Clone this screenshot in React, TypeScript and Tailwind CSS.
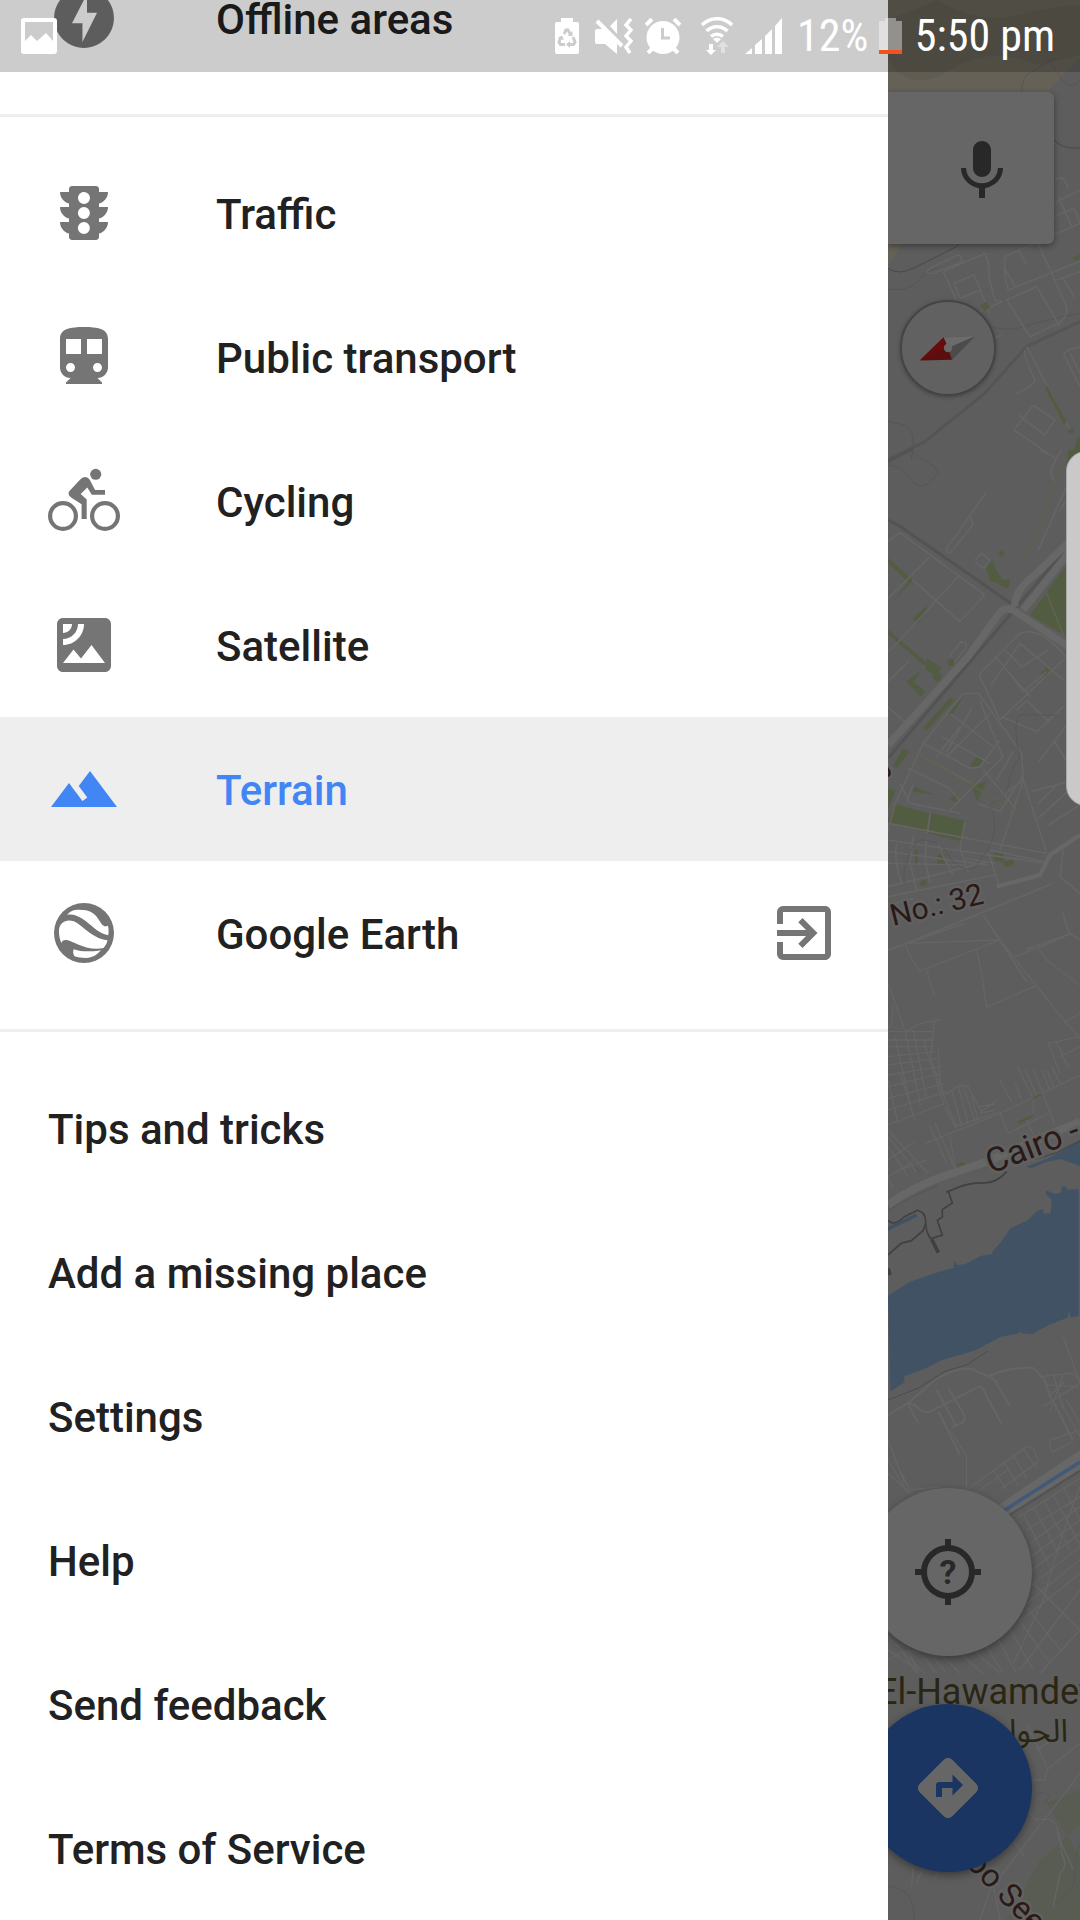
import { useState } from "react";
import type { ReactNode } from "react";
import {
  MdDirections,
  MdDirectionsTransit,
  MdExitToApp,
  MdOfflineBolt,
  MdSatellite,
  MdTerrain,
  MdTraffic,
} from "react-icons/md";

interface LayerItem {
  id: string;
  label: string;
  icon: ReactNode;
  external?: boolean;
}

const layers: LayerItem[] = [
  { id: "traffic", label: "Traffic", icon: <MdTraffic className="size-18" /> },
  { id: "transit", label: "Public transport", icon: <MdDirectionsTransit className="size-18" /> },
  { id: "cycling", label: "Cycling", icon: <CyclingIcon /> },
  { id: "satellite", label: "Satellite", icon: <MdSatellite className="size-18" /> },
  { id: "terrain", label: "Terrain", icon: <MdTerrain className="size-18" /> },
  { id: "earth", label: "Google Earth", icon: <EarthIcon />, external: true },
];

const links = [
  "Tips and tricks",
  "Add a missing place",
  "Settings",
  "Help",
  "Send feedback",
  "Terms of Service",
];

export default function App() {
  const [active, setActive] = useState("terrain");

  return (
    <div className="relative flex min-h-screen overflow-hidden bg-white font-['Roboto',sans-serif]">
      <nav className="min-w-0 flex-1 overflow-hidden bg-white text-[42px] leading-[50px] font-medium text-[#212121]">
        {/* the list is scrolled, so its first row is partly cut off */}
        <div className="-mt-[54px] pb-6">
          <DrawerRow icon={<MdOfflineBolt className="size-18" />} label="Offline areas" />
        </div>

        <div className="border-t-3 border-[#eeeeee] py-6">
          {layers.map((item) => (
            <DrawerRow
              key={item.id}
              icon={item.icon}
              label={item.label}
              external={item.external}
              selected={item.id === active}
              onClick={() => setActive(item.id)}
            />
          ))}
        </div>

        <div className="border-t-3 border-[#eeeeee] pt-6">
          {links.map((label) => (
            <a key={label} href="#" className="flex h-36 items-center px-12 pt-1">
              {label}
            </a>
          ))}
        </div>
      </nav>

      <MapPane />
      <StatusBar />
    </div>
  );
}

function DrawerRow({ icon, label, external, selected, onClick }: {
  icon: ReactNode;
  label: string;
  external?: boolean;
  selected?: boolean;
  onClick?: () => void;
}) {
  return (
    <button
      type="button"
      onClick={onClick}
      className={`flex h-36 w-full items-center px-12 text-left ${
        selected ? "bg-[#eeeeee] text-[#4285f4]" : ""
      }`}
    >
      <span className={`mr-24 shrink-0 ${selected ? "text-[#4285f4]" : "text-[#757575]"}`}>{icon}</span>
      <span className="flex-1 pt-1">{label}</span>
      {external && <MdExitToApp className="size-18 shrink-0 text-[#757575]" />}
    </button>
  );
}

function StatusBar() {
  return (
    <header className="absolute inset-x-0 top-0 flex h-18 items-center justify-between bg-black/20 pr-6 pl-5 text-white">
      <svg viewBox="0 0 38 38" className="size-[38px]" fill="currentColor">
        <path fillRule="evenodd" d="M4 1h30a3 3 0 0 1 3 3v30a3 3 0 0 1-3 3H4a3 3 0 0 1-3-3V4a3 3 0 0 1 3-3zm1 4v19l6-6 6 6 9-8 7 8V5z" />
      </svg>

      <div className="flex items-center gap-3">
        <svg viewBox="0 0 28 36" className="h-9 w-7">
          <path d="M8 0h12v4h4a2 2 0 0 1 2 2v28a2 2 0 0 1-2 2H4a2 2 0 0 1-2-2V6a2 2 0 0 1 2-2h4z" fill="currentColor" />
          <g fill="none" stroke="#cccccc" strokeWidth="3">
            <path d="M11 16l2-4h2l2.500 4.500" />
            <path d="M8 19l-2 5 1.500 2.500H12" />
            <path d="M20 19l2 5-1.500 2.500H15" />
          </g>
          <path d="M19.500 13v5h-5zM5 20l4-2.500 2 4.500zM17 23v7l-4-3.500z" fill="#cccccc" />
        </svg>

        <svg viewBox="0 0 40 36" className="h-9 w-10" fill="currentColor">
          <path d="M4 11h6l4 0 10 12v13L12 26H4a2 2 0 0 1-2-2V13a2 2 0 0 1 2-2zM24 1v15l-7-8z" />
          <path d="M4 3l25 25" fill="none" stroke="currentColor" strokeWidth="4" />
          <path d="M38 1l-5 6 5 5-5 6 5 5-5 6 4 6" fill="none" stroke="currentColor" strokeWidth="3.500" />
        </svg>

        <svg viewBox="0 0 36 36" className="size-9">
          <circle cx="18" cy="19.500" r="16.500" fill="currentColor" />
          <path d="M1 7l6-6M35 7l-6-6M3 35l5-5M33 35l-5-5" stroke="currentColor" strokeWidth="4" />
          <path d="M17.500 10v10H25" fill="none" stroke="#cccccc" strokeWidth="3" />
        </svg>

        <svg viewBox="0 0 40 38" className="h-[38px] w-10">
          <g fill="none" stroke="currentColor" strokeWidth="3.500">
            <path d="M9 8a21 21 0 0 1 30 0" />
            <path d="M13.500 14a15 15 0 0 1 21 0" />
            <path d="M18 19.500a9 9 0 0 1 12 0" />
          </g>
          <path d="M20 22q4-3 8 0l-4 4z" fill="currentColor" />
          <path d="M16 27h4v6h3l-5 5-5-5h3z" fill="currentColor" />
          <path d="M28 36v-6h-4l6-6 6 6h-4v6z" fill="currentColor" opacity=".4" />
        </svg>

        <svg viewBox="0 0 40 36" className="h-9 w-10" fill="currentColor">
          <path d="M0 36l7-6v6zM10 27l7-6v15h-7zM20 18l7-7v25h-7zM30 8l7-8v36h-7z" />
        </svg>

        <span className="w-[70px] text-right font-['Roboto_Condensed','Roboto',sans-serif] text-[44px] leading-[50px]">12%</span>

        <svg viewBox="0 0 23 36" className="h-9 w-[23px]">
          <path d="M6 0h11v3h6v33H0V3h6z" fill="currentColor" opacity=".4" />
          <path d="M0 32h23v4H0z" fill="#f4511e" />
        </svg>

        <span className="w-[142px] text-center font-['Roboto_Condensed','Roboto',sans-serif] text-[44px] leading-[50px] whitespace-nowrap">5:50 pm</span>
      </div>
    </header>
  );
}

function MapPane() {
  return (
    <main className="relative w-48 shrink-0 overflow-hidden bg-[#5d5d5d]">
      <MapCanvas />

      <div className="absolute top-[92px] right-[26px] left-0 flex h-[152px] items-center justify-end rounded-r-md bg-[#666666] pt-1.5 pr-9 shadow-[0_2px_6px_rgba(0,0,0,0.4)]">
        <button type="button" aria-label="Voice search" className="text-[#282828]">
          <svg viewBox="0 0 24 24" className="size-18" fill="currentColor">
            <path d="M12 14c1.660 0 3-1.340 3-3V5c0-1.660-1.340-3-3-3S9 3.340 9 5v6c0 1.660 1.340 3 3 3zm5.300-3c0 3-2.540 5.100-5.300 5.100S6.700 14 6.700 11H5c0 3.410 2.720 6.230 6 6.720V21h2v-3.280c3.280-.48 6-3.300 6-6.720h-1.700z" />
          </svg>
        </button>
      </div>

      <button
        type="button"
        aria-label="Compass"
        className="absolute top-[300px] left-3 size-24 rounded-full border-2 border-[#444444] bg-[#626262]/85 shadow-[0_1px_4px_rgba(0,0,0,0.3)]"
      >
        <svg viewBox="2 2 92 92" className="size-full">
          <path d="M43.500 37.500l32-1.500L52 60z" fill="#4b4b4b" />
          <path d="M43.500 37.500l32-1.500L48 48z" fill="#6c6c6c" />
          <path d="M43.500 37.500L20 60.500l32-.8L48 48z" fill="#5c0d0d" />
          <path d="M43.500 37.500L20 60 48 48z" fill="#650c0c" />
          <circle cx="48" cy="48" r="4.200" fill="#686868" />
        </svg>
      </button>

      {/* edge panel handle */}
      <div className="absolute top-[451px] -right-2 h-[355px] w-[22px] rounded-l-[20px] border border-[#a8a8a8] bg-[#c9c9c9]" />

      <div className="absolute bottom-12 -left-6 flex flex-col gap-12">
        <button
          type="button"
          aria-label="My location"
          className="flex size-42 items-center justify-center rounded-full bg-[#666666] text-[#282828] shadow-[0_3px_8px_rgba(0,0,0,0.4)]"
        >
          <svg viewBox="0 0 72 72" className="size-18">
            <circle cx="36" cy="36" r="24" fill="none" stroke="currentColor" strokeWidth="6" />
            <path d="M36 3v8M36 61v8M3 36h8M61 36h8" stroke="currentColor" strokeWidth="6" />
            <text x="36" y="48" textAnchor="middle" fontSize="34" fontWeight="700" fill="currentColor">?</text>
          </svg>
        </button>
        <button
          type="button"
          aria-label="Directions"
          className="flex size-42 items-center justify-center rounded-full bg-[#1a3562] text-[#666666] shadow-[0_3px_8px_rgba(0,0,0,0.4)]"
        >
          <MdDirections className="size-18" />
        </button>
      </div>
    </main>
  );
}

function MapCanvas() {
  return (
    <svg viewBox="0 0 192 1920" preserveAspectRatio="xMinYMin slice" className="absolute inset-0 size-full">
      {/* desert and hills at the top */}
      <path d="M0 0h192v60L165 90 130 130 12 248 0 265z" fill="#656157" />
      <path d="M50 0q40 25 80 15t62-10v50l-40 10q-50-20-90 5T0 60V20z" fill="#605c52" />
      <path d="M192 58v90h-30V88z" fill="#5d5d5d" />

      <g transform="translate(-8 60) scale(.3333)" fill="none" stroke="#656565" strokeWidth="5">
        <path d="M24 625q30 22 75 0t130-65q30-25 30-40M522 240q30 30 78 24" stroke="#484848" strokeWidth="3" />
        <path d="M24 688q60 8 90-25t60-40M330 800q60 15 110-2t160-38M24 1085q60 8 70 30t0 85M600 60q-30 40-60-10l-40-60M425 95q0-50 30-60l70-40" stroke="#525252" strokeWidth="2" />
        <path d="M24 1200l110-55 180-145 125-140 161-75" stroke="#555555" strokeWidth="9" />
        <path d="M150 625q-20 18 10 15l85-33q0-30-20-18zM190 635l60 130M190 635l125-55q15 30 12 75l18 65 20 5-65 30M222 670l60-25 20 45-62 25zM135 755l60-28M135 755l65 140 165-70M300 690l30 70" />
        <path d="M415 570l25 45M375 590q-5 60 10 100l215-85M375 590l225-100M470 540l90 200q5 30-25 50l-85 40-70-110 90-40 70 120M376 630l30 50M530 660l70-25M550 655l35 60M522 430l78-40M522 470l60-25 20 45M535 410l40 90M525 360q25-20 40 25" />
        <path d="M435 870q-5 10 10 45t20 45q0 15-58 42M440 860l130 250M460 1035l-58 75 130 90M460 1035l65 45-30 45-80-60M600 860q-60 15-45 30l45 90M570 880l30 60" />
      </g>
      <g transform="translate(-8 60) scale(.3333)" fill="#525c40">
        <path d="M302 735l18-10 10 18-18 10zM578 592l22-8v12l-18 5zM500 975l60 110-8 8-55-105zM565 1110l15-5 5 15-18-2zM570 1200l25-70 5 0v70z" />
      </g>

      <g transform="translate(-8 450) scale(.3333)">
        <path d="M24 325l75 65-60 65 45-60-60-55zM98 505l45-40-10 30-20 25zM24 540l160 135-8 8L24 552zM140 625l45 28-18 25-30-20zM80 695l45-38-25 40 35 25-12 18zM130 832l82-90 8 10-80 90zM203 792l48-55-35 60zM318 355l20-25 10 30 20 30 22-2-5 28-55-25zM450 495l48-65 45 120zM500 425l60-80v210l-20-5zM565 0h35v20l-40 40zM355 312l12-12 8 12-15 8zM483 668l20-18 8 20-10 14zM40 945l30-50 17 12-37 50zM270 950l22-35 17 20-15 20zM275 1010l45-17-28 60zM98 1025l5-15 65 25zM210 1050l18-20 12 28zM42 1063l110 28-12 56-118-30zM155 1090l102 23-15 60-97-23zM24 1015l22 5-22 60zM105 1200h8v45h-8zM172 1215l20-8 8 40-26-2zM343 1210l28 2v25l-30-5zM370 1235l30-8v20l-25 5zM120 1295l20-5v15l-18 5zM560 560l30-20v20z" fill="#525c40" />
        <circle cx="172" cy="680" r="13" fill="#525c40" />
        <circle cx="213" cy="637" r="11" fill="#525c40" />
        <g fill="none" stroke="#656565" strokeWidth="5">
          <path d="M24 275l35-28 255 188-75 80L98 390M150 320l-130 130M239 375L60 570 24 605M85 635l-61 60M24 770l50 45M240 515l-70-60M318 128L198 298q5 15 15 8l65-80q0-30-15-22M285 330l20-20 25 20-20 25-25-20M208 620l35-45q20 0 15 18l-35 45M600 20l-125 280M555 155l-15 30M545 0q-40 60-30 80l10 15M480 0l25 12" />
          <path d="M300 670l120-120q50-20 110 40l50 55M330 710l90-130 130 110M345 620l105 120M375 600l50 50 80-50M380 660l50 65 70-60M300 670q-5 10 15 40l45 100M360 810l190-180M410 780l30-28 70 65M365 800l105 45 80-75M520 880l-45 55M520 880l80-110M520 870l80 125M455 1025l110-30M475 1060l60-60M470 1110l130-120M505 1125l95-60" />
          <path d="M250 730h45l130 180 5 80 70 220M250 730l-120 150-85 180-24 95M275 775l-75 130M240 830l-70 90M210 790l130 100M330 790l-130 130M300 755l70 170M185 860l145 80M130 880l140 75 30-5 60-80M110 910l165 90M85 955l125 60 30 40M430 990l-80 60M370 920l-160 160M310 960l100 120M400 905l-50 85M60 1000l30 60 150 30M290 1060l70 25 70-110M430 990l-70 210M80 1060l20-60" />
          <path d="M24 1120l475 90M24 1170l470 70M255 1115l-15 80 25 70M150 1090l-8 60M24 1205l300 40M24 1240l230 5M24 1310l300-75M24 1340l320-65M50 1180q-10 50 15 120M100 1155l-10 85 20 80M140 1170l-5 60 15 70M175 1180q20 60 45 95M325 1205l30 95M24 1365l80-20M255 1225l90 15M330 1200l160 35" />
          <path d="M310 1395l130 200M80 1480l440-180M600 1330l-60-50 10-80M548 1388l20 65-130 45M568 1450l32 20M24 1500l230-80" />
        </g>
        <path d="M24 210l35 18 345 240M24 925L560 295M24 35l75-40" fill="none" stroke="#535353" strokeWidth="9" />
        <path d="M24 885l240-265 90-125q20-30 50-12l196 130M404 470q0-50 60-95l136-130M430 480l170-215" fill="none" stroke="#676767" strokeWidth="22" />
        <path d="M600 1155l-90 60-30 60-130 35" fill="none" stroke="#676767" strokeWidth="13" />
        <path d="M555 20L425 355M110 910l300 175M500 430l50 125" fill="none" stroke="#5e624f" strokeWidth="5" />
        <path d="M24 45q40 0 70 45t80-20q0-20-45-40l-40-30M530 795H440q-30-10-32 30t10 100q-25 25-30 70t-60 70q20 40 15 80t-60 110q-25 10-50-10t-35-40-25-25-40-10-45 40-15 90" fill="none" stroke="#535353" strokeWidth="2" />
      </g>

      <g transform="translate(-8 940) scale(.3333)">
        <g fill="none" stroke="#656565" strokeWidth="4">
          <path d="M360 0L80 10M80 10q-5 10 15 45t25 38L360 0l195 245 45 50M405 50L555-10M290 30l15 70 15 102 148-65M475 25l25 35 100 75M555 245l45-25M140 90l25 82M24 130l52 145M40 190l-5 60-10 15" />
          <path d="M24 275h138M76 275l45-25 60-10M24 300h138M24 320h138M24 350l140-15M24 375l150-20M24 405l155-25M24 440l160-40M24 475l170-45M24 510l180-55M24 555l170-65M162 245l-10 110 45 130M175 320l5 100q10 60 55 150M76 275l45 220M100 270l40 210M45 290l45 200M60 400l45 140M24 420l30 130M130 300l60 190M24 590l85 105M24 570l120 130M24 620l60 90M24 660l80-55M24 710l75-45M40 750l-16-40" />
          <path d="M195 465l45-30 25 5 30 60 10 15 45-35M195 500l30 60 135-45M215 450l30 110M235 440l30 110M250 440l35 105M275 470l20 75M295 500l50-8M300 520l45-10M135 610l225-90M150 560l50 110M165 550l60 135M210 590l15 90M60 690l80-30" />
          <path d="M360 520l240-115M360 420l35 65M405 430l20 50M412 380l45 90M435 390l35 75M460 390l30 70M485 390l25 60M500 390l22 50M515 380l25 50M505 310l35 90M505 310l95-20M530 305l35 80M540 350l60-30M360 520l25 60 120-60M490 465l35 90M460 480v40M440 540l20 45" />
        </g>
        <path d="M412 545l48-22v8l-45 20zM460 470l25-10v6l-25 10zM232 672l20-5 4 10-24 8zM105 678l20 20-8-3z" fill="#525c40" />
        <path d="M24 795q60-45 150-80l140-48 286-122" fill="none" stroke="#676767" strokeWidth="24" />
        <path d="M24 812q70-45 150-75" fill="none" stroke="#535353" strokeWidth="3" />

        {/* the river */}
        <path d="M24 1068l20-14 45-28 70-25 62-18 2-22 8 14 24-2 50-26 30-5 8-14 20-22 15-22 12-18 30-15 20-8 32-30 15-6 5 14 20-2 3-40-18-18 2-10 25 10 18-2 4-20 8-2 8 12 34-2v380l-24 6-4-20-6 20-56 22-50 28-30-3-6-8-2 8-55 10-80 42-100 30-50 25-60 22v18l-42 28z" fill="#425265" />
        <path d="M438 680l60-22 50-25 52-32v78l-30-12-30-10-45 10-40 18zM24 860l85-40 2 10-87 42z" fill="#425265" />
        <path d="M380 695q-30 35-70 34t-80 15-25 10l12 35-30 20 0 22-15 10 15 45-35 10q-15-20-15-50t-25-35l-40 20q-30 30-48 10M24 945l40-35 30-8 35-30 8-20" fill="none" stroke="#404040" strokeWidth="5" />
        <path d="M155 898l20 40M24 985l6 20" stroke="#404040" strokeWidth="11" />
        <path d="M600 602l-70 36-65 20" fill="none" stroke="#484848" strokeWidth="4" />
        <path d="M24 1380l90-35 80-50 70-22 60-40" fill="none" stroke="#4b4b4b" strokeWidth="3" />

        <g fill="none" stroke="#656565" strokeWidth="6">
          <path d="M24 1425l60-35 70-60q60-50 120-43l50 22q70-30 135-25l35 35 15 45 70 136M85 1390l20 5q20 25 40 22l145-73q10-10 20 5l55 105M325 1310q20 5 30 30l35 60M170 1350l60 110M205 1345l45 75q10 20-5 30l-30 12M175 1415l65 130M85 1395l30 55" />
          <path d="M550 1190l50 140M480 1310l95-10 25 20M495 1335l100 5M505 1370l50-45M520 1300l30 110M550 1305l-40 110M560 1380l40 70M490 1400l110-70M545 1390l55 100" strokeWidth="4" />
        </g>
      </g>

      <g transform="translate(-8 1430) scale(.3333)">
        <path d="M600 1180l-60 60-60 50-100 180h220zM500 1120l100-40v200z" fill="#595c53" />
        <path d="M355 225L600 60v60L390 260z" fill="#676767" />
        <path d="M375 240L600 96" fill="none" stroke="#425a78" strokeWidth="11" />
        <path d="M390 255L600 122" fill="none" stroke="#535353" strokeWidth="7" />
        <g fill="none" stroke="#656565" strokeWidth="4">
          <path d="M210 0l50 80v95M24 30l50 130M24 90l60 100M24 130l80 70M45 90l45 90 90-10M260 180l180-130 20 5 15 40-110 80M280 195l110-80M340 120l40 60M370 95l45 70M400 75l40 70M430 55l40 60M600 0l-90 30q-5 30 10 35l60-30" />
          <path d="M410 265l190-120M440 300l160-100M450 340l150-110M455 380l145-110M455 420l145-110M450 470l150-120M440 520l160-130M425 570l175-140M430 250l80 160M460 230l75 140M490 210l80 150M520 195l80 150M550 170l50 100M600 170q-60 150-110 340L400 700M460 460l140 140M430 520l120 150M410 560l100 140M380 580l80 140M600 600L480 730M350 620l60 110M320 650l50 80M600 480L420 720" />
          <path d="M24 620l110 110M50 640l60 90M85 660l30 70M24 660l90 60M130 680l40 50M160 680l40 50M24 690q60-40 90-20M190 680l50 50M250 680l60 50M290 670l70 60" />
          <path d="M600 1030L330 1380l-30 90M430 1130l40 40q50-10 60 20t15 80q20 40-5 60l-20 100M460 1050l35 0 5-30 100-80M400 1230l35 50M340 1370l20 100M24 1250l130 30M100 1310l-5 60M130 1310l-20 50M180 1320l-20 30M440 880l60 130M470 960l60-40M530 1210l50 110" />
        </g>
        <path d="M24 1370q80 0 78 100M600 1240q-20 60-15 100t-60 80M465 1105q5-20 30-15t-5 35" fill="none" stroke="#535353" strokeWidth="2" />
      </g>

      <g fill="#2a1916" stroke="#616161" strokeWidth="5" style={{ paintOrder: "stroke" }}>
        <text transform="translate(-5 774) rotate(-50)" fontSize="30">y</text>
        <text transform="translate(5 926) rotate(-14)" fontSize="30">No.: 32</text>
        <text transform="translate(103 1174) rotate(-21)" fontSize="34">Cairo -</text>
        <text transform="translate(77 1864) rotate(46)" fontSize="32">oo Seer</text>
      </g>
      <g fill="#2b2614" fontSize="36">
        <text x="-11" y="1704">El-Hawamdeyah</text>
        <text x="180" y="1742" direction="rtl" fontSize="32" fontFamily="'Noto Sans Arabic', 'DejaVu Sans', sans-serif">الحوامدية</text>
      </g>
    </svg>
  );
}

function CyclingIcon() {
  return (
    <svg viewBox="0 0 24 24" className="size-18" fill="currentColor">
      <circle cx="15.900" cy="3.100" r="1.850" />
      <g fill="none" stroke="currentColor" strokeWidth="1.400">
        <circle cx="5" cy="17" r="4.300" />
        <circle cx="19" cy="17" r="4.300" />
      </g>
      <path d="M12.400 4q1 0 1.500.9l1.800 3.400H19v1.600h-4.400l-1.500-2.400-2.200 2.200 2 1.800V18h-1.700v-4.900l-3.500-2.300Q6.200 9.700 7.300 8.500L11 4.600q.6-.6 1.400-.6z" />
    </svg>
  );
}

function EarthIcon() {
  return (
    <svg viewBox="-6 -6 72 72" className="size-18" fill="currentColor">
      <path
        fillRule="evenodd"
        d="M30 0a30 30 0 1 0 0 60 30 30 0 0 0 0-60zM13 11.700C16 9 18 7.300 21 7c7-.5 12 0 16 2 8 4 9 13 14 14.500l3-.8c.8 4 .8 6 .2 9.600C42 29.500 36 20 28 15.500c-6-3.500-9-4.500-15-3.800zM5 28c0-7 5-10.500 10-10.500 7 0 11 5 17 9.500 6 4.600 13 9.500 21.500 10.300-.6 3-2 5.700-4 7.700-5 1.200-11 1-17-.6C25 42.500 17 38 13 37c-3-.5-5 .5-5.600 3C6 37 4.800 32 5 28zM19.700 46.300c5 1.700 9 2 14 2 5 .2 9 0 13.300-1.300-4 5-8 7.500-15 8-5 0-8-.6-11.500-1.700-1.500-2-1.700-5-.8-7z"
      />
    </svg>
  );
}
